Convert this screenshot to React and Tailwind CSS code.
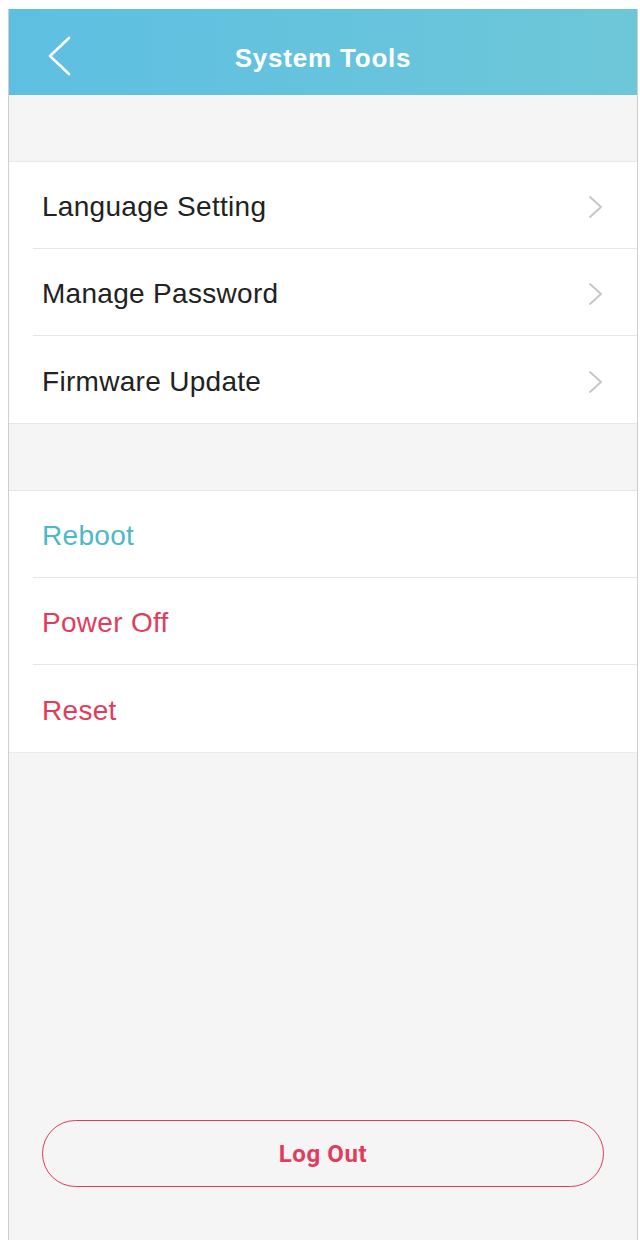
const font = { fontFamily: '"Liberation Sans", Arial, sans-serif' }

function Chevron() {
  return (
    <svg width="16" height="24" viewBox="0 0 16 24" fill="none" className="shrink-0">
      <polyline
        points="2,2 13,12 2,22"
        stroke="#c4c4c6"
        strokeWidth="1.8"
        strokeLinecap="round"
        strokeLinejoin="round"
      />
    </svg>
  )
}

function Row({ label, color = "text-[#222222]", chevron = false, divider = true }) {
  return (
    <div className="pl-[24px]">
      <div
        className={
          "flex h-[87px] items-center justify-between pl-[9px] pr-[33px] pt-[4px] " +
          (divider ? "border-b border-[#e6e6e6]" : "")
        }
      >
        <span className={"text-[28px] tracking-[0.3px] " + color}>{label}</span>
        {chevron && <Chevron />}
      </div>
    </div>
  )
}

export default function App() {
  return (
    <div className="min-h-[1240px] bg-white pl-[8px] pr-[2px] pt-[9px]" style={font}>
      <div className="flex min-h-[1231px] flex-col border-x border-[#cfcfcf] bg-[#f5f5f5]">
        {/* header */}
        <header className="relative flex h-[86px] items-center justify-center bg-gradient-to-r from-[#5ebfe2] to-[#6dc7d8] pt-[12px]">
          <svg
            width="30"
            height="42"
            viewBox="0 0 30 42"
            fill="none"
            className="absolute left-[35px] top-[26px]"
          >
            <polyline
              points="25,3 6,21 25,39"
              stroke="white"
              strokeWidth="2.6"
              strokeLinecap="round"
              strokeLinejoin="round"
            />
          </svg>
          <h1 className="text-[26px] font-bold tracking-[0.8px] text-white">System Tools</h1>
        </header>

        <div className="h-[67px] border-b border-[#e8e8e8]" />

        <section className="bg-white">
          <Row label="Language Setting" chevron />
          <Row label="Manage Password" chevron />
          <Row label="Firmware Update" chevron divider={false} />
        </section>

        <div className="h-[68px] border-y border-[#e6e6e6]" />

        <section className="bg-white border-b border-[#ececec]">
          <Row label="Reboot" color="text-[#4cb8c9]" />
          <Row label="Power Off" color="text-[#e23c5c]" />
          <Row label="Reset" color="text-[#e23c5c]" divider={false} />
        </section>

        <div className="flex flex-1 flex-col justify-end px-[33px] pb-[53px]">
          <button
            className="flex h-[67px] w-full items-center justify-center rounded-full border-[1.5px] border-[#e23c5c] text-[24px] font-bold tracking-[0.6px] text-[#e23c5c]"
            style={{ fontFamily: "Roboto, Arial, sans-serif" }}
          >
            Log Out
          </button>
        </div>
      </div>
    </div>
  )
}
